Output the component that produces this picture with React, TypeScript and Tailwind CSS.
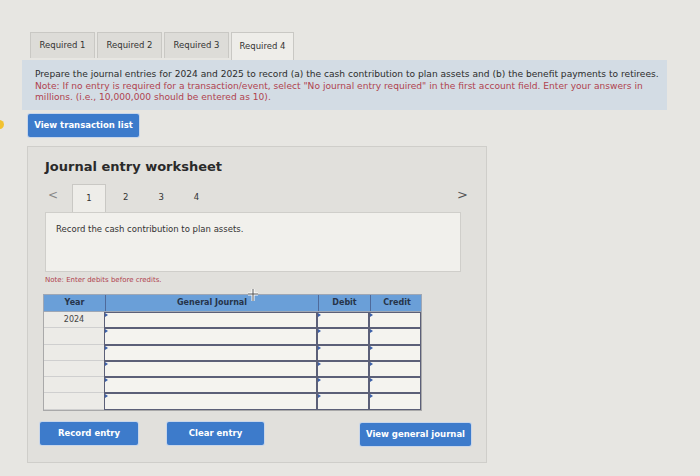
import React from 'react';

const rows = ['2024', '', '', '', '', ''];

const Tab = ({ label, active }: { label: string; active?: boolean }) => (
  <div
    className={`flex items-center justify-center border border-b-0 border-[#c9c8c4] text-[8.5px] text-[#333] ${
      active ? 'h-[28px] w-[63px] bg-[#eeede9]' : 'mb-[2px] h-[26px] w-[65px] bg-[#dddcd8] mr-[2px]'
    }`}
  >
    {label}
  </div>
);

const BlueButton = ({ label, w }: { label: string; w: string }) => (
  <button
    className={`${w} block h-[23px] rounded-[2px] bg-[#3d7bcb] text-[8.5px] font-bold text-white shadow-[0_0_0_1px_#c8d6ea]`}
  >
    {label}
  </button>
);

export default function App() {
  return (
    <div
      className="relative h-[476px] w-[700px] overflow-hidden bg-[#e7e6e2] text-[#333]"
      style={{ fontFamily: '"DejaVu Sans", Verdana, sans-serif' }}
    >
      {/* yellow marker at the left edge */}
      <div className="absolute left-[-5px] top-[120px] h-[9px] w-[9px] rounded-full bg-[#f2c230]" />

      {/* Required tabs */}
      <div className="flex items-end pl-[30px] pt-[32px]">
        <Tab label="Required 1" />
        <Tab label="Required 2" />
        <Tab label="Required 3" />
        <Tab label="Required 4" active />
      </div>

      {/* Instructions */}
      <div className="ml-[22px] h-[50px] w-[645px] bg-[#d3dce4] pl-[13px] pt-[9px] text-[9.1px] leading-[11.5px]">
        <div className="w-[628px]">
          <p className="text-[#2c2c2c]">
            Prepare the journal entries for 2024 and 2025 to record (a) the cash contribution to plan assets and (b) the
            benefit payments to retirees.
          </p>
          <p className="text-[#b0434f]">
            Note: If no entry is required for a transaction/event, select "No journal entry required" in the first
            account field. Enter your answers in millions. (i.e., 10,000,000 should be entered as 10).
          </p>
        </div>
      </div>

      <div className="ml-[28px] mt-[4px] flex">
        <BlueButton label="View transaction list" w="w-[111px]" />
      </div>

      {/* Worksheet */}
      <div className="ml-[27px] mt-[9px] h-[317px] w-[460px] border border-[#cfceca] bg-[#e1e0dc] pl-[17px] pt-[10px]">
        <h2 className="text-[13px] font-bold text-[#2a2a2a]">Journal entry worksheet</h2>

        <div className="mt-[6px] flex h-[29px] w-[425px] items-end">
          <span className="mb-[8px] ml-[3px] w-[24px] text-[12px] text-[#888]">&lt;</span>
          <div className="flex h-[28px] w-[34px] items-center justify-center border border-b-0 border-[#c9c8c4] bg-[#eeede9] text-[8.5px]">
            1
          </div>
          <div className="mb-[8px] flex gap-[30px] pl-[17px] text-[8.5px]">
            <span>2</span>
            <span>3</span>
            <span>4</span>
          </div>
          <span className="mb-[7px] ml-auto mr-[2px] text-[13px] text-[#555]">&gt;</span>
        </div>

        <div className="h-[60px] w-[416px] border border-[#cfceca] bg-[#f1f0ec] px-[10px] pt-[10px] text-[8.5px]">
          Record the cash contribution to plan assets.
        </div>

        <p className="mt-[3px] text-[7px] text-[#b0434f]">Note: Enter debits before credits.</p>

        <div className="relative mt-[9px] ml-[-2px] w-[379px]">
          <svg className="absolute left-[204px] top-[-6px]" width="12" height="14" viewBox="0 0 12 14">
            <path d="M6 1v12M1 6h10" stroke="#fff" strokeWidth="3" />
            <path d="M6 1v12M1 6h10" stroke="#555" strokeWidth="1" />
          </svg>
          <div className="grid grid-cols-[61px_213px_52px_53px] border border-[#9ea7b5] bg-[#6a9fd8] text-[8px] font-bold text-[#26344a]">
            <div className="flex h-[16px] items-center justify-center">Year</div>
            <div className="flex h-[16px] items-center justify-center border-l border-[#4f6a9a]">General Journal</div>
            <div className="flex h-[16px] items-center justify-center border-l border-[#4f6a9a]">Debit</div>
            <div className="flex h-[16px] items-center justify-center border-l border-[#4f6a9a]">Credit</div>
          </div>
          <div className="border-x border-b border-[#a9a9a9]">
            {rows.map((y, i) => (
              <div key={i} className="grid grid-cols-[60px_213px_52px_52px]">
                <div className="flex h-[16.3px] items-center justify-center border-b border-[#cfcfcf] bg-[#ecebe7] text-[8px] text-[#444]">
                  {y}
                </div>
                {[0, 1, 2].map((c) => (
                  <div key={c} className="relative h-[16.3px] border-[1.5px] border-[#5b5f78] bg-[#f4f3ef]">
                    <span className="absolute left-0 top-0 h-0 w-0 border-y-[2px] border-l-[3px] border-y-transparent border-l-[#3b5fa8]" />
                  </div>
                ))}
              </div>
            ))}
          </div>
        </div>

        <div className="mt-[10px] flex w-[426px] items-center">
          <div className="ml-[-5px]">
            <BlueButton label="Record entry" w="w-[98px]" />
          </div>
          <div className="ml-[29px]">
            <BlueButton label="Clear entry" w="w-[97px]" />
          </div>
          <div className="ml-auto mt-[2px]">
            <BlueButton label="View general journal" w="w-[111px]" />
          </div>
        </div>
      </div>
    </div>
  );
}
